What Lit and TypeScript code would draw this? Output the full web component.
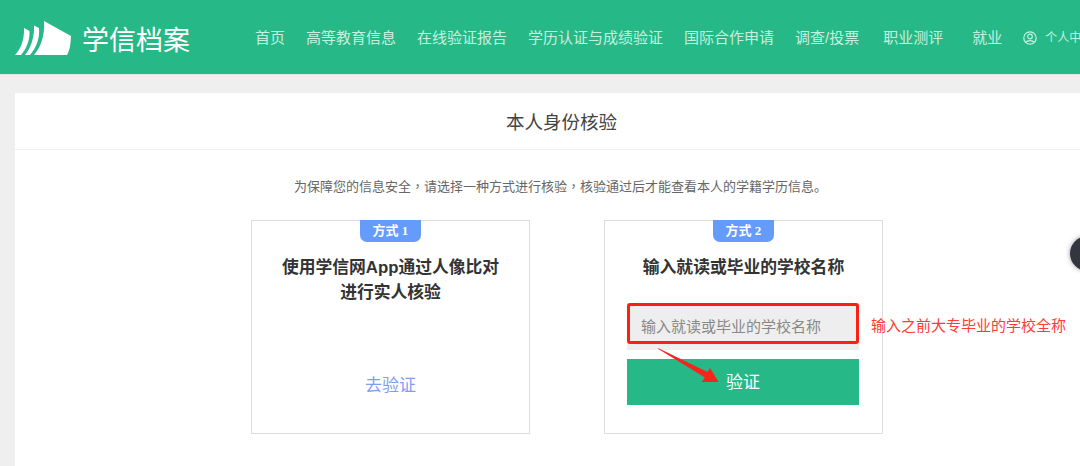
import { LitElement, html, css, svg } from "lit";
import { customElement } from "lit/decorators.js";

const NAV = [
  ["首页", 21], ["高等教育信息", 21], ["在线验证报告", 21], ["学历认证与成绩验证", 21],
  ["国际合作申请", 21], ["调查/投票", 24], ["职业测评", 29], ["就业", 21],
] as const;

@customElement("app-root")
export class AppRoot extends LitElement {
  static styles = css`
    :host { display: block; width: 1080px; height: 466px; overflow: hidden; position: relative; background: #efefef;
      font-family: "Liberation Sans", "Noto Sans CJK SC", sans-serif; }
    .top { height: 75px; background: #26b987; display: flex; align-items: center; padding-left: 15px; white-space: nowrap; box-sizing: border-box; border-bottom: 1px solid #dfe8e4; overflow: hidden; }
    .logo { width: 56px; height: 34px; flex: none; margin-top: 1px; }
    .brand { font-size: 27px; color: #fff; margin-left: 11px; width: 108px; flex: none; line-height: 30px; font-weight: 400; margin-top: 8px; }
    .nav { display: flex; margin-left: 65px; color: #c5f0df; font-size: 15px; line-height: 20px; margin-top: 1px; align-items: center; }
    .user { display: flex; align-items: center; color: #c5f0df; font-size: 12px; gap: 8px; }
    .user svg { width: 14px; height: 14px; }
    .panel { position: absolute; left: 15px; top: 93px; width: 1065px; height: 373px; background: #fff; }
    .title { height: 56px; border-bottom: 1px solid #eee; display: flex; align-items: center; justify-content: center; font-size: 18.500px; color: #444; }
    .title span { margin-left: 28px; }
    .note { height: 18px; text-align: center; font-size: 13px; color: #666; line-height: 18px; margin-top: 28px; margin-left: 26px; white-space: nowrap; }
    .tc { font-family: "Noto Sans CJK TC", sans-serif; line-height: 0; }
    .cards { display: flex; gap: 74px; margin: 24px 0 0 236px; }
    .card { width: 279px; height: 214px; box-sizing: border-box; border: 1px solid #ddd; display: flex; flex-direction: column; align-items: center; }
    .badge { width: 61px; height: 22px; margin-top: -1px; background: #659bfb; color: #fff; font: bold 13px/21px "Liberation Serif", "Noto Sans CJK SC", serif; text-align: center; border-radius: 0 0 7px 7px; }
    .card h3 { margin: 13px 0 0; font-size: 16.800px; line-height: 25px; font-weight: 700; color: #333; text-align: center; width: 250px; }
    .go { margin-top: 69px; font-size: 17px; color: #7f9df0; line-height: 24px; }
    .input { width: 232px; height: 47px; margin: 23px 1px 0 0; background: #eee; color: #888; font-size: 15px; line-height: 48px; padding-left: 14px; box-sizing: border-box; white-space: nowrap; }
    .btn { width: 232px; height: 46px; margin: 9px 1px 0 0; background: #26b987; color: #fff; font-size: 17px; text-align: center; line-height: 47px; }
    .redbox { position: absolute; left: 627px; top: 303px; width: 232px; height: 41px; box-sizing: border-box; border: 3px solid #ff1e14; border-radius: 3px; }
    .redtext { position: absolute; left: 871px; top: 316px; color: #ff3b36; font-size: 15px; line-height: 20px; white-space: nowrap; }
    .arrow { position: absolute; left: 655px; top: 345px; width: 70px; height: 42px; }
    .float { position: absolute; left: 1070px; top: 236px; width: 35px; height: 35px; border-radius: 50%; background: #33363f; box-shadow: 0 0 5px rgba(0,0,0,.4); }
  `;

  render() {
    return html`
      <div class="top">
        <svg class="logo" viewBox="0 0 56 34" aria-hidden="true">
          <path fill="#fff" d="M9 7L14.500 10C15 20 11 28 6 34L0 34C6 28 9.500 18 9 7Z"/>
          <path fill="#fff" d="M19 4.500L24 7C25 18 21 27 15 34L10 34C16 27 19.500 16 19 4.500Z"/>
          <path fill="#fff" d="M29 0L56 15C55.500 23 55 29 52 34L19 34C26 26 30 14 29 0Z"/>
        </svg>
        <div class="brand">学信档案</div>
        <nav class="nav">
          ${NAV.map(([t, g]) => html`<span style="margin-right:${g}px">${t}</span>`)}
          <span class="user">
            <svg viewBox="0 0 14 14" fill="none" stroke="#c5f0df" stroke-width="1.2">
              <circle cx="7" cy="7" r="6.200"/><circle cx="7" cy="5.500" r="2.300"/>
              <path d="M3 11.500C4 9 10 9 11 11.500"/>
            </svg>
            个人中心
          </span>
        </nav>
      </div>
      <div class="panel">
        <div class="title"><span>本人身份核验</span></div>
        <div class="note">为保障您的信息安全<span class="tc" lang="zh-Hant">，</span>请选择一种方式进行核验<span class="tc" lang="zh-Hant">，</span>核验通过后才能查看本人的学籍学历信息。</div>
        <div class="cards">
          <div class="card">
            <div class="badge">方式 1</div>
            <h3>使用学信网App通过人像比对<br>进行实人核验</h3>
            <div class="go">去验证</div>
          </div>
          <div class="card">
            <div class="badge">方式 2</div>
            <h3>输入就读或毕业的学校名称</h3>
            <div class="input">输入就读或毕业的学校名称</div>
            <div class="btn">验证</div>
          </div>
        </div>
      </div>
      <div class="redbox"></div>
      <div class="redtext">输入之前大专毕业的学校全称</div>
      <svg class="arrow" viewBox="0 0 70 42" aria-hidden="true">
        ${svg`<path fill="#f5241c" d="M2.500 3.500L4 3.500L52.500 27L55 23L63.500 37L46.500 37L50 32.500Z"/>`}
      </svg>
      <div class="float"></div>
    `;
  }
}
